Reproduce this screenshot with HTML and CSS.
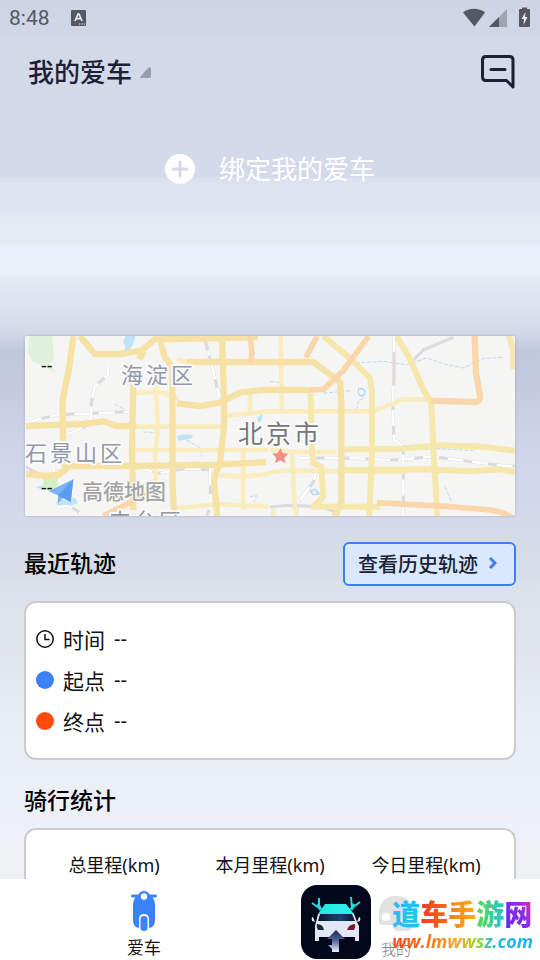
FILE: index.html
```
<!DOCTYPE html>
<html lang="zh-CN">
<head>
    <meta charset="UTF-8">
    <meta name="viewport" content="width=device-width, initial-scale=1">
    <title>我的爱车</title>
    <link rel="stylesheet" href="styles.css">
</head>
<body>
    <div class="status-bar">
        <span class="time">8:48</span>
        <svg class="ime" width="15" height="16" viewBox="0 0 15 16">
            <rect width="15" height="16" rx="1" fill="#555860"/>
            <path d="M4 11 7 4h1l3 7M5.300 8.700h4.400" fill="none" stroke="#e8ebf3" stroke-width="1.700"/>
            <path d="M8 14h1.300M10.400 14h1.300M12.700 14h1.300" stroke="#e8ebf3" stroke-width="1.200"/>
        </svg>
        <svg class="signals" width="68" height="20" viewBox="0 0 68 20">
            <path d="M0 4.500C6-.5 16-.5 22 4.500L11.500 18.500z" fill="#555860"/>
            <path d="M44 1v18H26z" fill="#9fa4b3"/>
            <path d="M36 9v10H26z" fill="#555860"/>
            <path d="M57 1h2V-.500h5V1h2q1 0 1 1v16q0 1-1 1h-9q-1 0-1-1V2q0-1 1-1z" fill="#555860"/>
            <path d="M62.500 4 58.500 11h2.500l-.500 6 4-8h-2.500z" fill="#e8ebf3"/>
        </svg>
    </div>

    <main class="content">
        <header class="header">
            <button class="car-select" type="button">
                <h1>我的爱车</h1>
                <svg width="11" height="11" viewBox="0 0 11 11"><path d="M9 0q2 0 2 2v7q0 2-2 2H1.500Q-.500 11 1 9z" fill="#969eb1"/></svg>
            </button>
            <button class="message" type="button" aria-label="消息">
                <svg width="34" height="34" viewBox="0 0 34 34" fill="none" stroke="#1b2036" stroke-width="3">
                    <path d="M32 32V5q0-3.500-3.500-3.500H5Q1.500 1.500 1.500 5v17q0 3.500 3.500 3.500h20.500z" stroke-linejoin="round"/>
                    <path d="M10 14.500h14" stroke-linecap="round"/>
                </svg>
            </button>
        </header>

        <button class="bind" type="button">
            <svg width="30" height="30" viewBox="0 0 30 30">
                <circle cx="15" cy="15" r="15" fill="#fff"/>
                <path d="M15 8v14M8 15h14" stroke="#d4d9e6" stroke-width="3" stroke-linecap="round"/>
            </svg>
            <span>绑定我的爱车</span>
        </button>

        <section class="map">
            <svg class="map-tiles" viewBox="0 0 490 180" preserveAspectRatio="xMidYMid slice">
                <rect width="490" height="180" fill="#f5f5f4"/>
                <g transform="translate(-5 -6) scale(.33333)" fill="none" stroke-linejoin="round">
                    <!-- parks and water -->
                    <path d="M28 18h68l6 64-12 22 18 26-30-20-40-14-14-30z" fill="#dff1da"/>
                    <path d="M70 440l24-10 20 14-2 30-24 12-18-16z" fill="#d3efc4"/>
                    <path d="M316 18h30l-8 28-18 26-16 4 12-24-6-16zM470 318l20-6 30 4-8 10-36 6zM712 262l16-10-4 22-8 4zM46 472l24-6v14zM110 512l56-8 8 16-40 12-24-8z" fill="#bfe3f8"/>
                    <path d="M284 222l22 12 18 14M370 306l50 2M500 330l40 24 6 26M690 500l20-4-8 20M990 100l100-6 70 10 60-20 60 20 50 10 60-28 60-4M910 190l80-8M1010 240l6-30 20-6M1016 176l20 4-10 20M750 154l30 4M870 480l30 12M1275 470l20 46M1180 360l80-4 100 6" stroke="#b9dcf2" stroke-width="3" stroke-dasharray="12 5"/>
                    <path d="M1016 176q14-4 18 8t-10 14q-12-2-8-22M870 484l16-6 12 14-18 2z" stroke="#b2daf5" stroke-width="4"/>

                    <!-- railways -->
                    <g stroke="#dadadf" stroke-width="9">
                        <path d="M18 278L110 254 215 250 350 244M262 100l2 34-40 36-10 50v40l-20 30-50 22M554 30l20 70 24 100M18 410l60 36M100 400l2 34M350 412l70 18 70-14 80 4 2 110-12 28M110 535q40-20 76 22M1122 18v130l-4 60 4 120 28 22v210M840 384h130l60 2 90 4 120-10 120 16 100 12h60M840 510l40-54 16-60M750 530l60-4 90 4 60 20M1180 90l30-30 90-38"/>
                    </g>
                    <g stroke="#fff" stroke-width="7" stroke-dasharray="48 26">
                        <path d="M18 278L110 254 215 250 350 244M262 100l2 34-40 36-10 50v40l-20 30-50 22M554 30l20 70 24 100M100 400l2 34M350 412l70 18 70-14 80 4 2 110-12 28M110 535q40-20 76 22M1122 18v130l-4 60 4 120 28 22v210M840 384h130l60 2 90 4 120-10 120 16 100 12h60M840 510l40-54 16-60"/>
                    </g>
                    <path d="M1122 90v64M556 32l8 30" stroke="#e5d9dc" stroke-width="10"/>

                    <!-- secondary roads -->
                    <g stroke="#f9edc0" stroke-width="14">
                        <path d="M335 190l80-6 60 22M406 160l8 120-8 90v90l-20 50M345 360h400M350 290h260M620 258l70-8 60-6h310l90-36h90M690 180v70M670 360v180M600 436l70 4 70-8q30-12 90-10l330 4M782 18l4 230M815 360l10 180M750 360l80 6h120M465 536l130-14 150 8M120 420l-14 16M500 96l-30-8M760 536v22M830 530v28"/>
                    </g>

                    <!-- main roads -->
                    <g stroke="#f7e2a6" stroke-width="19">
                        <path d="M160 18L148 110 128 210v80l4 120M18 288l112-4 60-2 60-8 40 14h60M180 18l44 54h80l60-10 50-42M18 432l60 6 40-4 30-26h200l250-4 140-8M340 160l-4 200 4 180M414 28l300-6M420 30l14 50 22 30 2 160v200l4 80M606 18l6 190v80l-12 110-18 50 10 110M500 96h380l80 60 4 60v300l-20 42M470 220l70 8 60-10 60-30 70-8h140M372 64l-14 24"/>
                    </g>
                    <g stroke="#f6e7ad" stroke-width="18">
                        <path d="M910 18l90 76 50 50 6 40v180l-8 194M1130 18l40 70 40 90 24 40 8 170 10 170M872 190l4 180 4 30 24 10 6 90-30 30h200M970 358l170-2 120-10 130 4 95 12M970 420l250-2 130 6 90-6 45 8M1466 18l14 40v60"/>
                    </g>
                    <path d="M1234 212l130 4q18 0 16-18l-12-70-4-110" stroke="#fad6ab" stroke-width="19"/>
                    <path d="M690 18l6 50-4 30M892 18l-34 64M870 180l40-2 60-56 76-104M250 558l90-46 50-20M1070 518l220 12 120 10q40 4 75 28" stroke="#fad6ab" stroke-width="17"/>

                    <!-- capital marker and the compass arrow -->
                    <path d="M781 354l7 15 17 2-12 12 3 17-15-9-16 9 4-17-12-12 17-2z" fill="#f58d87"/>
                    <path d="M160 448L86 484l28 12v24l18-18 20 14z" fill="#7ab2f6"/>
                    <path d="M160 448L114 496l38 20z" fill="#5c9cf0"/>
                </g>
                <g class="district">
                    <text x="96" y="47">海淀区</text>
                    <text x="0" y="125">石景山区</text>
                    <text x="84" y="193">丰台区</text>
                </g>
                <text class="city" x="213" y="107">北京市</text>
                <text class="brand" x="57" y="163">高德地图</text>
                <text class="value" x="16" y="36">--</text>
                <text class="value" x="16" y="158">--</text>
            </svg>
        </section>

        <div class="section-head">
            <h2>最近轨迹</h2>
            <button class="history" type="button">
                查看历史轨迹
                <svg width="8" height="12" viewBox="0 0 8 12" fill="none" stroke="#3b80f0" stroke-width="3"><path d="M1 1l5 5-5 5"/></svg>
            </button>
        </div>
        <section class="card track">
            <div class="row">
                <svg width="18" height="18" viewBox="0 0 18 18" fill="none" stroke="#111" stroke-width="1.500">
                    <circle cx="9" cy="9" r="8.200"/>
                    <path d="M9 4v5.500h4.500"/>
                </svg>
                <span>时间</span><span>--</span>
            </div>
            <div class="row"><i class="dot start"></i><span>起点</span><span>--</span></div>
            <div class="row"><i class="dot end"></i><span>终点</span><span>--</span></div>
        </section>

        <div class="section-head stats-head">
            <h2>骑行统计</h2>
        </div>
        <section class="card stats">
            <span>总里程(km)</span>
            <span>本月里程(km)</span>
            <span>今日里程(km)</span>
        </section>
    </main>

    <nav class="tab-bar">
        <a href="#" class="tab active">
            <svg width="26" height="40" viewBox="0 0 26 40">
                <path d="M1.500 3.500h6Q9 0 13 0t5.500 3.500h6q1.500 0 1.500 1.500t-1.500 1.500h-3Q24 9 24 13v16q0 7-6 8V28q0-5-5-5t-5 5v9q-6-1-6-8V13q0-4 2.500-6.500h-3Q0 6.500 0 5t1.500-1.500z" fill="#3a82f7"/>
                <circle cx="13" cy="5.500" r="3.200" fill="#fff"/>
                <rect x="9.500" y="25" width="7" height="15" rx="3.500" fill="#3a82f7"/>
            </svg>
            <span>爱车</span>
        </a>
        <a href="#" class="tab mine">
            <svg width="34" height="40" viewBox="0 0 34 40">
                <path d="M0 31V22Q1 5 17 5t17 17v11q0 7-6 7H17q-2 0-3-6H4q-4 0-4-3z" fill="#e2e2e2"/>
                <circle cx="7" cy="26" r="4" fill="#fff"/>
            </svg>
            <span>我的</span>
        </a>

        <div class="watermark">
            <svg width="70" height="74" viewBox="0 0 70 74">
                <defs>
                    <linearGradient id="roof" x2="1"><stop stop-color="#21e6da"/><stop offset="1" stop-color="#30f0f2"/></linearGradient>
                    <linearGradient id="glass" x2="1"><stop stop-color="#071633"/><stop offset=".6" stop-color="#164570"/><stop offset="1" stop-color="#07142e"/></linearGradient>
                    <linearGradient id="arrow" x2="0" y2="1"><stop stop-color="#142456"/><stop offset=".5" stop-color="#56699a"/><stop offset="1" stop-color="#eef2fb"/></linearGradient>
                </defs>
                <rect width="70" height="74" rx="16" fill="#03081d"/>
                <path d="M24 19h21l8 10H17z" fill="url(#roof)"/>
                <path d="M17 29h36l3 8 2 4v15h-4v-4H18v4h-4V41l1-4z" fill="#e2e7f6"/>
                <path d="M19 29h32l3 7H17z" fill="url(#glass)"/>
                <path d="M12 32q-2 0-1 4l3 1zM58 32q2 0 1 4l-3 1z" fill="#e2e7f6"/>
                <path d="M16 39q6 0 7 6h-6q-2-3-1-6z" fill="#172b32"/>
                <path d="M54 39q-6 0-8 6h7q2-3 1-6z" fill="#711d2c"/>
                <path d="M35 45l9 9h-6v13h-7v-3l-4-4h4v-6h-5z" fill="url(#arrow)"/>
                <path d="M18 13v10l-7-5M50 12l1 11 8-6" fill="none" stroke="#25d8dd" stroke-width="2"/>
                <path d="M17 19l3 6M53 19l-3 6" stroke="#25d8dd" stroke-width="3"/>
            </svg>
            <div class="watermark-text">
                <strong><b class="c1">道</b><b class="c2">车</b><b class="c3">手</b><b class="c4">游</b><b class="c5">网</b></strong>
                <em>ww.lmwwsz.com</em>
            </div>
        </div>
    </nav>
</body>
</html>
```
FILE: styles.css
```
:root {
    --ink: #1b2235;
    --blue: #3b80f0;
    --border: #cccccf;
}

* {
    margin: 0;
    padding: 0;
    box-sizing: border-box;
}

body {
    display: flex;
    flex-direction: column;
    height: 100vh;
    font-family: "Noto Sans", "Noto Sans CJK SC", sans-serif;
    color: #111;
    background:
        linear-gradient(180deg,
            #ced4e4 0, #d0d6e5 30px, #d3d9e7 42px, #d4daea 177px,
            #dbe2ee 178px, #e0e4f1 210px, #e2eaf3 218px, #e4ebf4 242px,
            #e9f0fb 248px, #ebf1fb 270px, #e2e9f3 282px, #dde3ef 305px,
            #d4d9e8 332px, #bfc8de 352px, #c3cade 384px, #cdd3e6 430px,
            #d1d8ea 490px, #d9dde9 578px, #dbe2ec 586px, #e1e4ec 650px,
            #e8edf6 720px, #edf0f8 820px, #eef2f4 870px);
}

button {
    border: none;
    background: none;
    font: inherit;
    cursor: pointer;
}

svg {
    display: block;
    flex: none;
}

.status-bar {
    display: flex;
    align-items: center;
    height: 38px;
    padding: 0 9px 2px 9px;
    color: #555860;
}

.time {
    font-family: Roboto, sans-serif;
    font-size: 21px;
}

.ime {
    margin-left: 21px;
}

.signals {
    margin-left: auto;
    overflow: visible;
}

.content {
    flex: 1;
    min-height: 0;
    padding: 0 24px;
    overflow-y: auto;
    scrollbar-width: none;
}

/* Header */
.header {
    display: flex;
    align-items: center;
    justify-content: space-between;
    height: 68px;
    padding: 0 1px 0 4px;
}

.car-select {
    display: flex;
    align-items: center;
    gap: 8px;
    color: var(--ink);
}

h1 {
    font-size: 26px;
    font-weight: 500;
    line-height: 40px;
}

.bind {
    display: flex;
    align-items: center;
    justify-content: center;
    gap: 24px;
    width: 100%;
    height: 40px;
    margin-top: 43px;
    font-size: 26px;
    line-height: 40px;
    color: #fff;
}

/* Map */
.map {
    height: 180px;
    margin: 147px 1px 0;
    overflow: hidden;
    border-radius: 2px;
    box-shadow: 0 0 3px rgba(0, 0, 0, 0.2);
}

.map-tiles {
    width: 100%;
    height: 100%;
}

.map text {
    paint-order: stroke;
    stroke: #fafafa;
    stroke-width: 4px;
    stroke-linejoin: round;
}

.map .district {
    font-size: 22px;
    letter-spacing: 3px;
    fill: #9298aa;
}

.map .city {
    font-size: 25px;
    letter-spacing: 3px;
    fill: #777;
}

.map .brand {
    font-size: 21px;
    font-weight: 500;
    fill: #a3a3a3;
    stroke-width: 2px;
}

.map .value {
    font-size: 18px;
    fill: #111;
    stroke: none;
}

/* Sections */
.section-head {
    display: flex;
    align-items: center;
    justify-content: space-between;
    height: 44px;
    margin: 26px 0 15px;
}

.stats-head {
    height: 42px;
    margin: 20px 0 6px;
}

h2 {
    padding-bottom: 2px;
    font-size: 23px;
    font-weight: 500;
    line-height: 36px;
    color: #000;
}

.history {
    display: flex;
    align-items: center;
    gap: 11px;
    height: 44px;
    padding: 0 17px 2px 13px;
    border: 2px solid var(--blue);
    border-radius: 6px;
    background: #d9e8fe;
    font-size: 20px;
    font-weight: 500;
    color: var(--ink);
}

.card {
    border: 2px solid var(--border);
    border-radius: 12px;
    background: #fff;
}

.track {
    padding: 15px 10px 17px;
}

.row {
    display: flex;
    align-items: center;
    gap: 9px;
    height: 41px;
    font-size: 21px;
}

.row span + span {
    font-size: 20px;
}

.dot {
    width: 18px;
    height: 18px;
    border-radius: 50%;
}

.start {
    background: #3a82f7;
}

.end {
    background: #ff4b0c;
}

.stats {
    display: grid;
    grid-template-columns: repeat(3, 1fr);
    height: 150px;
    padding: 20px 10px;
    font-size: 18px;
    line-height: 30px;
    text-align: center;
}

/* Bottom tabs */
.tab-bar {
    position: relative;
    display: grid;
    grid-template-columns: 1fr 1fr;
    height: 81px;
    padding: 12px 18px 0;
    background: #fff;
}

.tab {
    display: flex;
    flex-direction: column;
    align-items: center;
    gap: 4px;
    font-size: 17px;
    line-height: 26px;
    color: #777;
    text-decoration: none;
}

.tab.active {
    color: #111;
}

.tab.mine {
    gap: 8px;
    font-size: 15px;
    font-weight: 300;
    line-height: 20px;
}

.watermark {
    position: absolute;
    right: 7px;
    bottom: 1px;
    display: flex;
    align-items: center;
    gap: 21px;
}

.watermark-text {
    display: flex;
    flex-direction: column;
    padding-top: 6px;
}

.watermark strong {
    display: flex;
    font-size: 28px;
    line-height: 32px;
}

.watermark b,
.watermark em {
    color: transparent;
    background-clip: text;
}

.watermark em {
    font-family: "Open Sans", sans-serif;
    font-size: 18px;
    font-weight: 700;
    line-height: 22px;
    background-image: linear-gradient(90deg, #f4471e, #f7671c 20%, #f9a51b 45%, #8fd935 62%, #22b9e6 72%, #1cb0f2);
}

.c1 { background-image: linear-gradient(90deg, #35baf3, #19c6e8); }
.c2 { background-image: linear-gradient(90deg, #f4391d, #f36c1a); }
.c3 { background-image: linear-gradient(90deg, #f47a17, #f9b31c); }
.c4 { background-image: linear-gradient(90deg, #5cd94a, #1fc9d2); }
.c5 { background-image: linear-gradient(60deg, #5b2df0, #8b2bea 60%, #f52f7d); }
```
